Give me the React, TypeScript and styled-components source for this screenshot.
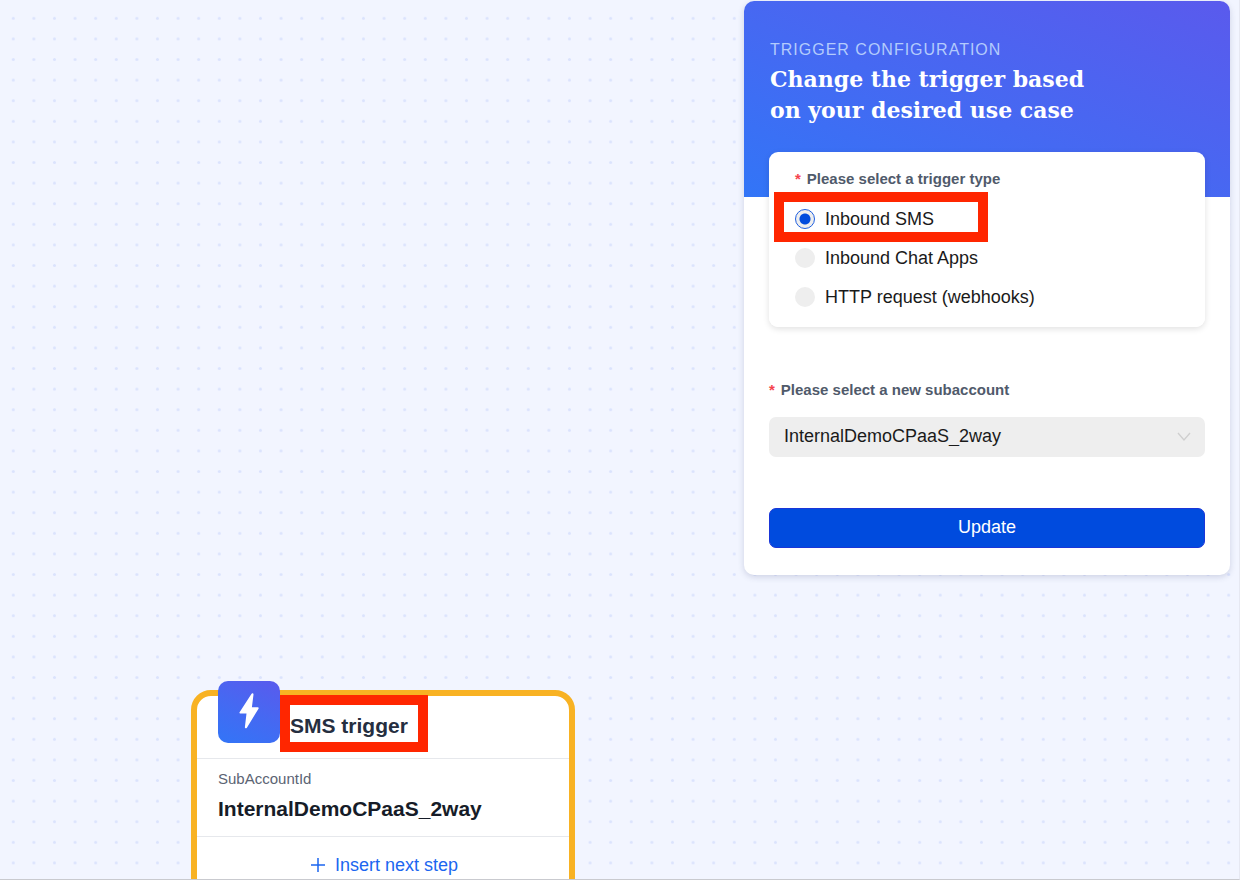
import React, { useState } from "react";
import styled, { createGlobalStyle } from "styled-components";

const sans = `"Liberation Sans", Arial, sans-serif`;
const serif = `"DejaVu Serif", Georgia, serif`;

const GlobalStyle = createGlobalStyle`
  *, *::before, *::after { box-sizing: border-box; }
  body {
    margin: 0;
    background: #f2f5ff;
    font-family: ${sans};
    color: #1a1a1a;
  }
`;

const Canvas = styled.main`
  position: relative;
  z-index: 0;
  display: flex;
  justify-content: flex-end;
  align-items: flex-start;
  height: 100vh;
  padding: 1px 9px 0 0;
  overflow: hidden;
  border-right: 1px solid #e6e8f2;
  border-bottom: 1px solid #c9cacf;
`;

const DotGrid = styled.svg`
  position: absolute;
  inset: 0;
  z-index: -1;
  width: 100%;
  height: 100%;
`;

const Highlight = styled.span<{ $width: number; $height: number }>`
  position: absolute;
  z-index: 2;
  width: ${(p) => p.$width}px;
  height: ${(p) => p.$height}px;
  border: 10px solid #ff2600;
  pointer-events: none;
`;

/* Configuration panel */

const Panel = styled.form`
  width: 486px;
  max-width: 100%;
  padding-bottom: 27px;
  border-radius: 10px;
  background: #fff;
  box-shadow: 0 2px 6px rgba(60, 70, 120, 0.2);
`;

const PanelHeader = styled.header`
  height: 196px;
  padding: 39px 26px 0;
  border-radius: 10px 10px 0 0;
  background: linear-gradient(22deg, #3275f7 0%, #4569f2 45%, #5a5aed 100%);
`;

const Eyebrow = styled.p`
  margin: 0;
  font-size: 16px;
  line-height: 20px;
  letter-spacing: 1px;
  text-transform: uppercase;
  color: #b3cbfc;
`;

const PanelTitle = styled.h1`
  max-width: 340px;
  margin: 4px 0 0;
  font-family: ${serif};
  font-size: 22px;
  font-weight: 700;
  line-height: 31px;
  color: #fff;
`;

const TriggerCard = styled.fieldset`
  position: relative;
  display: flex;
  flex-direction: column;
  gap: 19px;
  margin: -45px 25px 0;
  padding: 18px 26px 20px;
  border: 0;
  border-radius: 9px;
  background: #fff;
  box-shadow: 0 2px 6px rgba(0, 0, 0, 0.12);
`;

const FieldLabel = styled.span`
  display: flex;
  gap: 6px;
  font-size: 15px;
  font-weight: 700;
  line-height: 18px;
  padding-bottom: 2px;
  color: #505a6b;
`;

const Required = styled.span`
  color: #f5434d;
`;

const Option = styled.label`
  position: relative;
  display: flex;
  align-items: center;
  gap: 10px;
  font-size: 18px;
  line-height: 20px;
`;

const Radio = styled.input`
  appearance: none;
  width: 20px;
  height: 20px;
  margin: 0;
  border-radius: 50%;
  background: #eee;

  &:checked {
    border: 1px solid #1f5fe0;
    background: radial-gradient(circle, #004bdd 5px, #eee 6px);
  }
`;

const OptionHighlight = styled(Highlight)`
  top: -17px;
  left: -21px;
`;

const AccountField = styled.div`
  display: flex;
  flex-direction: column;
  gap: 16px;
  margin: 54px 25px 0;
`;

const SelectBox = styled.div`
  display: grid;
  align-items: center;

  > * {
    grid-area: 1 / 1;
  }
`;

const Select = styled.select`
  appearance: none;
  width: 100%;
  height: 40px;
  padding: 0 40px 2px 15px;
  border: 0;
  border-radius: 7px;
  background: #eee;
  font-family: ${sans};
  font-size: 18px;
  color: #1a1a1a;
`;

const Chevron = styled.svg`
  justify-self: end;
  width: 14px;
  height: 10px;
  margin-right: 14px;
  pointer-events: none;
`;

const UpdateButton = styled.button`
  display: block;
  width: calc(100% - 50px);
  height: 40px;
  margin: 51px 25px 0;
  padding: 0 0 1px;
  border: 1px solid #1a36d8;
  border-radius: 7px;
  background: #004bde;
  font-family: ${sans};
  font-size: 18px;
  color: #fff;
`;

/* Workflow node */

const Node = styled.article`
  position: absolute;
  top: 690px;
  left: 191px;
  width: 384px;
  border: 6px solid #f8b223;
  border-radius: 20px;
  background: #fff;
`;

const NodeHeader = styled.header`
  position: relative;
  display: flex;
  align-items: center;
  gap: 10px;
  height: 63px;
  padding: 0 21px 2px;
  border-bottom: 1px solid #e6e8ec;
`;

const NodeIcon = styled.span`
  align-self: flex-start;
  width: 62px;
  height: 62px;
  margin-top: -15px;
  border-radius: 10px;
  background: linear-gradient(25deg, #3275f7, #4569f2 50%, #5a5aed);
`;

const NodeTitle = styled.h2`
  margin: 0;
  font-size: 21px;
  line-height: 24px;
  color: #252e40;
`;

const TitleHighlight = styled(Highlight)`
  top: -1px;
  left: 83px;
`;

const NodeBody = styled.dl`
  margin: 0;
  padding: 10px 21px 15px;
  border-bottom: 1px solid #e6e8ec;
`;

const NodeKey = styled.dt`
  font-size: 15px;
  line-height: 20px;
  color: #5b6473;
`;

const NodeValue = styled.dd`
  margin: 8px 0 0;
  font-size: 21px;
  font-weight: 700;
  line-height: 24px;
  color: #161c28;
`;

const InsertButton = styled.button`
  display: flex;
  align-items: center;
  justify-content: center;
  gap: 10px;
  width: 100%;
  height: 56px;
  padding: 0 0 0 3px;
  border: 0;
  background: none;
  font-family: ${sans};
  font-size: 18px;
  color: #1b66f0;
`;

const triggers = [
  { id: "sms", label: "Inbound SMS" },
  { id: "chat", label: "Inbound Chat Apps" },
  { id: "http", label: "HTTP request (webhooks)" },
];

function Dots() {
  return (
    <DotGrid aria-hidden="true">
      <defs>
        <pattern id="dots" x="3" y="8" width="20.6" height="20.6" patternUnits="userSpaceOnUse">
          <circle cx="10.3" cy="10.3" r="1.5" fill="#dbe3fd" />
        </pattern>
      </defs>
      <rect width="100%" height="100%" fill="url(#dots)" />
    </DotGrid>
  );
}

export default function App() {
  const [trigger, setTrigger] = useState("sms");

  return (
    <>
      <GlobalStyle />
      <Canvas>
        <Dots />

        <Node>
          <NodeHeader>
            <NodeIcon>
              <svg width="62" height="62" viewBox="0 0 62 62" aria-hidden="true">
                <path
                  d="M33.4 13 21.6 31.2c-.4.7-.1 1.3.7 1.3h6.2l-1.6 13.6c-.1 1.4 1.3 1.7 2 .6l11.6-19c.5-.9.1-1.5-.8-1.5h-5.8l1.6-12.6c.1-1.4-1.4-1.7-2.1-.6Z"
                  fill="#fff"
                />
              </svg>
            </NodeIcon>
            <NodeTitle>SMS trigger</NodeTitle>
            <TitleHighlight $width={148} $height={57} />
          </NodeHeader>
          <NodeBody>
            <NodeKey>SubAccountId</NodeKey>
            <NodeValue>InternalDemoCPaaS_2way</NodeValue>
          </NodeBody>
          <InsertButton type="button">
            <svg width="14" height="14" viewBox="0 0 14 14" aria-hidden="true">
              <path d="M7 0v14M0 7h14" stroke="currentColor" strokeWidth="1.5" />
            </svg>
            Insert next step
          </InsertButton>
        </Node>

        <Panel onSubmit={(e) => e.preventDefault()}>
          <PanelHeader>
            <Eyebrow>Trigger configuration</Eyebrow>
            <PanelTitle>Change the trigger based on your desired use case</PanelTitle>
          </PanelHeader>

          <TriggerCard aria-labelledby="trigger-type">
            <FieldLabel id="trigger-type">
              <Required>*</Required>
              Please select a trigger type
            </FieldLabel>
            {triggers.map((t) => (
              <Option key={t.id}>
                <Radio
                  type="radio"
                  name="trigger"
                  value={t.id}
                  checked={trigger === t.id}
                  onChange={() => setTrigger(t.id)}
                />
                {t.label}
                {t.id === "sms" && <OptionHighlight $width={214} $height={50} />}
              </Option>
            ))}
          </TriggerCard>

          <AccountField>
            <FieldLabel as="label" htmlFor="subaccount">
              <Required>*</Required>
              Please select a new subaccount
            </FieldLabel>
            <SelectBox>
              <Select id="subaccount" defaultValue="InternalDemoCPaaS_2way">
                <option>InternalDemoCPaaS_2way</option>
              </Select>
              <Chevron viewBox="0 0 14 10" aria-hidden="true">
                <path d="M1 1l6 7 6-7" fill="none" stroke="#cfcfcf" strokeWidth="1.3" />
              </Chevron>
            </SelectBox>
          </AccountField>

          <UpdateButton type="submit">Update</UpdateButton>
        </Panel>
      </Canvas>
    </>
  );
}
